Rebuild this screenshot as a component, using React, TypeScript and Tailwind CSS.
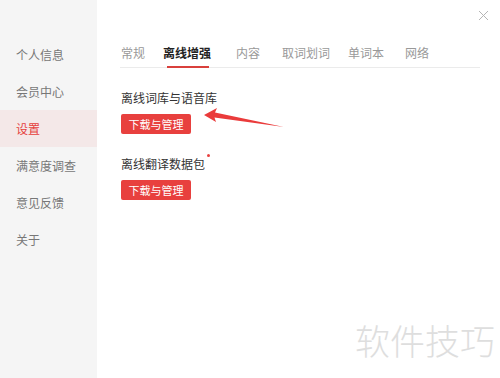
const menu = ["个人信息", "会员中心", "设置", "满意度调查", "意见反馈", "关于"];

const tabs = [
  { label: "常规", ml: "ml-0" },
  { label: "离线增强", ml: "ml-[18px]", active: true },
  { label: "内容", ml: "ml-[25px]" },
  { label: "取词划词", ml: "ml-[22px]" },
  { label: "单词本", ml: "ml-[18px]" },
  { label: "网络", ml: "ml-[21px]" },
];

function Section({ title, dot }: { title: string; dot?: boolean }) {
  return (
    <div className="flex flex-col items-start">
      <div className="relative text-[12px] leading-4 text-[#333]">
        {title}
        {dot && <span className="absolute -right-[5px] top-[-2px] h-[3px] w-[3px] rounded-full bg-[#e8403e]" />}
      </div>
      <button className="mt-[8px] h-[20px] w-[70px] rounded-[2px] bg-[#e8403e] text-[11px] leading-5 text-white">
        下载与管理
      </button>
    </div>
  );
}

export default function App() {
  return (
    <div
      className="relative flex h-[378px] w-[500px] overflow-hidden bg-white"
      style={{ fontFamily: '"Noto Sans CJK SC", "Noto Sans", sans-serif' }}
    >
      <aside className="flex w-[97px] flex-col bg-[#f5f5f5] pt-[36px]">
        {menu.map((m) => (
          <div
            key={m}
            className={
              "flex h-[37px] items-center pl-[16px] text-[12px] " +
              (m === "设置" ? "bg-[#f4e8e8] text-[#e5403c]" : "text-[#777]")
            }
          >
            {m}
          </div>
        ))}
      </aside>

      <main className="flex flex-1 flex-col pl-[23px] pr-[20px]">
        <div className="mt-[45px] flex border-b border-[#ebebeb] pl-[1px]">
          {tabs.map((t) => (
            <div
              key={t.label}
              className={
                "relative pb-[6px] text-[12px] leading-4 " +
                t.ml +
                " " +
                (t.active ? "font-bold text-[#222]" : "text-[#999]")
              }
            >
              {t.label}
              {t.active && (
                <span className="absolute bottom-[-1px] left-[4px] right-[2px] h-[2px] bg-[#d9403c]" />
              )}
            </div>
          ))}
        </div>

        <div className="mt-[22px] flex flex-col gap-[22px] pl-[1px]">
          <Section title="离线词库与语音库" />
          <Section title="离线翻译数据包" dot />
        </div>
      </main>

      <svg className="absolute left-[478px] top-[10px]" width="11" height="11" viewBox="0 0 11 11">
        <path d="M1 1L10 10M10 1L1 10" stroke="#b5b5b5" strokeWidth="1" />
      </svg>

      <svg className="absolute left-0 top-0" width="500" height="378" viewBox="0 0 500 378">
        <polygon
          points="204,115 217,108 215,112.5 284,127 214.5,117.5 216,122"
          fill="#ea3b3b"
        />
      </svg>

      <div className="absolute left-[355px] top-[318px] text-[35px] font-light leading-[44px] text-[#dedede]">
        软件技巧
      </div>
    </div>
  );
}
